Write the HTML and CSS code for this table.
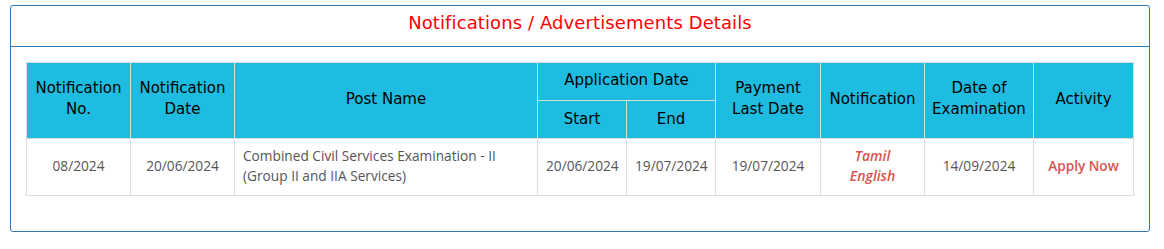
FILE: index.html
```html
<!DOCTYPE html>
<html>
<head>
<meta charset="utf-8">
<link rel="stylesheet" href="styles.css">
</head>
<body>
<div class="page">
  <div class="panel">
    <div class="panel-heading">Notifications / Advertisements Details</div>
    <div class="panel-body">
      <table class="notif">
        <colgroup>
          <col style="width:104px"><col style="width:104px"><col style="width:303px"><col style="width:89px"><col style="width:89px"><col style="width:105px"><col style="width:104px"><col style="width:109px"><col>
        </colgroup>
        <thead>
          <tr class="h1">
            <th rowspan="2">Notification<br>No.</th>
            <th rowspan="2">Notification<br>Date</th>
            <th rowspan="2">Post Name</th>
            <th colspan="2">Application Date</th>
            <th rowspan="2">Payment<br>Last Date</th>
            <th rowspan="2">Notification</th>
            <th rowspan="2">Date of<br>Examination</th>
            <th rowspan="2">Activity</th>
          </tr>
          <tr class="h2">
            <th>Start</th>
            <th>End</th>
          </tr>
        </thead>
        <tbody>
          <tr>
            <td>08/2024</td>
            <td>20/06/2024</td>
            <td class="left">Combined Civil Services Examination - II<br>(Group II and IIA Services)</td>
            <td>20/06/2024</td>
            <td>19/07/2024</td>
            <td>19/07/2024</td>
            <td><a class="lang" href="#">Tamil</a><br><a class="lang" href="#">English</a></td>
            <td>14/09/2024</td>
            <td><a class="apply" href="#">Apply Now</a></td>
          </tr>
        </tbody>
      </table>
    </div>
  </div>
</div>
</body>
</html>
```

FILE: styles.css
```css
html, body {
  margin: 0;
  padding: 0;
  background: #ffffff;
}
.page {
  padding: 5px 14px 0 10px;
}
.panel {
  border: 1px solid #337ab7;
  border-radius: 3px;
  height: 227px;
  box-sizing: border-box;
}
.panel-heading {
  height: 40px;
  border-bottom: 1px solid #337ab7;
  text-align: center;
  font-family: "DejaVu Sans", sans-serif;
  font-size: 18px;
  line-height: 34px;
  color: #ff0000;
  letter-spacing: 0.1px;
}
.panel-body {
  padding: 15px;
}
.notif {
  width: 1108px;
  border-collapse: collapse;
  table-layout: fixed;
}
.notif th {
  background: #1fbce1;
  border: 1px solid #dddddd;
  font-family: "DejaVu Sans", sans-serif;
  font-weight: normal;
  font-size: 15px;
  line-height: 21px;
  color: #000;
  text-align: center;
  padding: 0 0 3px 0;
  height: 34px;
}
.notif tr.h2 th {
  padding: 0 0 1px 0;
  height: 36px;
}
.notif td {
  border: 1px solid #dddddd;
  font-family: "Open Sans", sans-serif;
  font-size: 13.7px;
  line-height: 20px;
  color: #555555;
  text-align: center;
  padding: 7px 8px 9px 8px;
  height: 40px;
}
.notif td.left {
  text-align: left;
}
.lang {
  color: #d9534f;
  font-style: italic;
  font-weight: 600;
  font-size: 14px;
  text-decoration: none;
}
.apply {
  color: #d9534f;
  font-size: 13.6px;
  font-weight: 600;
  text-decoration: none;
}
```
